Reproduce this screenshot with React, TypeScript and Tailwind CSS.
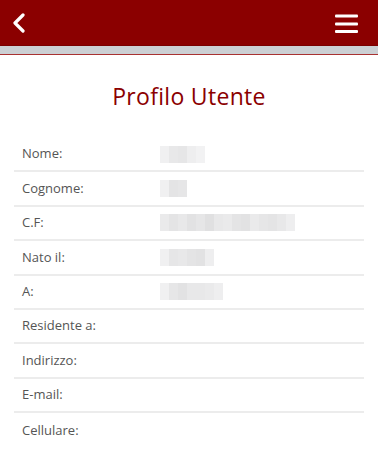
import React from 'react';

type Row = { label: string; blur?: number[] };

// grey shades of a pixelated (blurred) value, one entry per block column
const rows: Row[] = [
  { label: 'Nome:', blur: [0xf0, 0xe8, 0xe6, 0xee, 0xf2] },
  { label: 'Cognome:', blur: [0xf0, 0xe4, 0xe6] },
  { label: 'C.F:', blur: [0xea, 0xe4, 0xe8, 0xe2, 0xe6, 0xe0, 0xe8, 0xea, 0xe4, 0xe2, 0xea, 0xe6, 0xe4, 0xe8, 0xee] },
  { label: 'Nato il:', blur: [0xf0, 0xe6, 0xe8, 0xe4, 0xe2, 0xee] },
  { label: 'A:', blur: [0xf0, 0xe6, 0xe2, 0xe8, 0xe8, 0xea, 0xee] },
  { label: 'Residente a:' },
  { label: 'Indirizzo:' },
  { label: 'E-mail:' },
  { label: 'Cellulare:' },
];

const Blur: React.FC<{ shades: number[] }> = ({ shades }) => (
  <div className="flex h-[17px] ml-1" style={{ filter: 'blur(0.6px)' }}>
    {shades.map((s, i) => (
      <div
        key={i}
        className="w-[9px] h-full"
        style={{ backgroundColor: `rgb(${s},${s},${s + 1})` }}
      />
    ))}
  </div>
);

const App: React.FC = () => {
  return (
    <div className="w-[378px] min-h-[457px] bg-white" style={{ fontFamily: '"Open Sans", "Liberation Sans", sans-serif' }}>
      {/* Top bar */}
      <div className="h-[46px] bg-[#8b0000] border-b border-[#7a0000] flex items-center justify-between pl-[12px] pr-[20px]">
        <svg width="14" height="20" viewBox="0 0 14 20" className="text-white">
          <path d="M11 2 L3 10 L11 18" fill="none" stroke="currentColor" strokeWidth="3.2" strokeLinecap="round" strokeLinejoin="round" />
        </svg>
        <svg width="23" height="20" viewBox="0 0 23 20" className="text-white">
          <rect x="0" y="1.5" width="23" height="3" rx="1" fill="currentColor" />
          <rect x="0" y="9.5" width="23" height="3" rx="1" fill="currentColor" />
          <rect x="0" y="17" width="23" height="3" rx="1" fill="currentColor" />
        </svg>
      </div>
      <div className="h-[9px] bg-[#ccd0d4] border-b border-[#a83232]" />

      <h1 className="text-center text-[#8b0000] text-[23px] tracking-[0.3px] mt-[26px] leading-[30px]">
        Profilo Utente
      </h1>

      <div className="mx-[14px] mt-[27px]">
        {rows.map((r, i) => (
          <div
            key={r.label}
            className={`flex items-center h-[34.4px] text-[13px] font-medium text-[#555555] ${
              i < rows.length - 1 ? 'border-b-2 border-[#ececec]' : ''
            }`}
          >
            <div className="w-[141px] pl-[8px]">{r.label}</div>
            <div className="flex-1 pl-[1px]">{r.blur && <Blur shades={r.blur} />}</div>
          </div>
        ))}
      </div>
    </div>
  );
};

export default App;
